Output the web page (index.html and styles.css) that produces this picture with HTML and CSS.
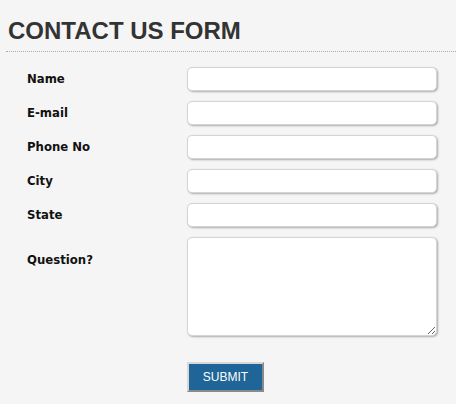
FILE: index.html
```html
<!DOCTYPE html>
<html>
<head>
<meta charset="utf-8">
<link rel="stylesheet" href="styles.css">
</head>
<body>
<div class="page">
  <h1 class="title">CONTACT US FORM</h1>
  <form class="form">
    <label class="label" for="name">Name</label>
    <input class="field" id="name" type="text">
    <label class="label" for="email">E-mail</label>
    <input class="field" id="email" type="text">
    <label class="label" for="phone">Phone No</label>
    <input class="field" id="phone" type="text">
    <label class="label" for="city">City</label>
    <input class="field" id="city" type="text">
    <label class="label" for="state">State</label>
    <input class="field" id="state" type="text">
    <label class="label label-top" for="question">Question?</label>
    <textarea class="field area" id="question"></textarea>
    <span></span>
    <button class="submit" type="button">SUBMIT</button>
  </form>
</div>
</body>
</html>
```
FILE: styles.css
```css
html, body {
  margin: 0;
  padding: 0;
  background: #f5f5f5;
}
.page {
  padding-left: 6px;
  height: 404px;
  box-sizing: border-box;
  overflow: hidden;
}
.title {
  margin: 0;
  padding: 17px 0 7px 2px;
  font-family: "Liberation Sans", Arial, sans-serif;
  font-size: 24px;
  line-height: 27px;
  font-weight: bold;
  color: #333;
  border-bottom: 1px dotted #aaa;
}
.form {
  display: grid;
  grid-template-columns: 160px 250px;
  row-gap: 10px;
  padding: 15px 0 0 21px;
  margin: 0;
}
.label {
  align-self: center;
  font-family: "DejaVu Sans Condensed", "DejaVu Sans", sans-serif;
  font-size: 13px;
  font-weight: bold;
  color: #111;
  line-height: 16px;
}
.label-top {
  align-self: start;
  padding-top: 15px;
}
.field {
  box-sizing: border-box;
  width: 250px;
  height: 24px;
  margin: 0;
  padding: 2px 6px;
  border: 1px solid #d4d4d4;
  border-radius: 5px;
  background: #fff;
  box-shadow: 1px 1px 2px rgba(0, 0, 0, 0.3);
  font-family: "Liberation Sans", Arial, sans-serif;
  font-size: 13px;
  outline: none;
}
.area {
  height: 99px;
  resize: both;
}
.submit {
  margin-top: 16px;
  width: 77px;
  height: 30px;
  padding: 0;
  background: #1f6597;
  color: #fff;
  border: 2px solid;
  border-color: #d8d8d8 #8a8a8a #8a8a8a #d8d8d8;
  font-family: "Liberation Sans", Arial, sans-serif;
  font-size: 12px;
  cursor: pointer;
}
```
